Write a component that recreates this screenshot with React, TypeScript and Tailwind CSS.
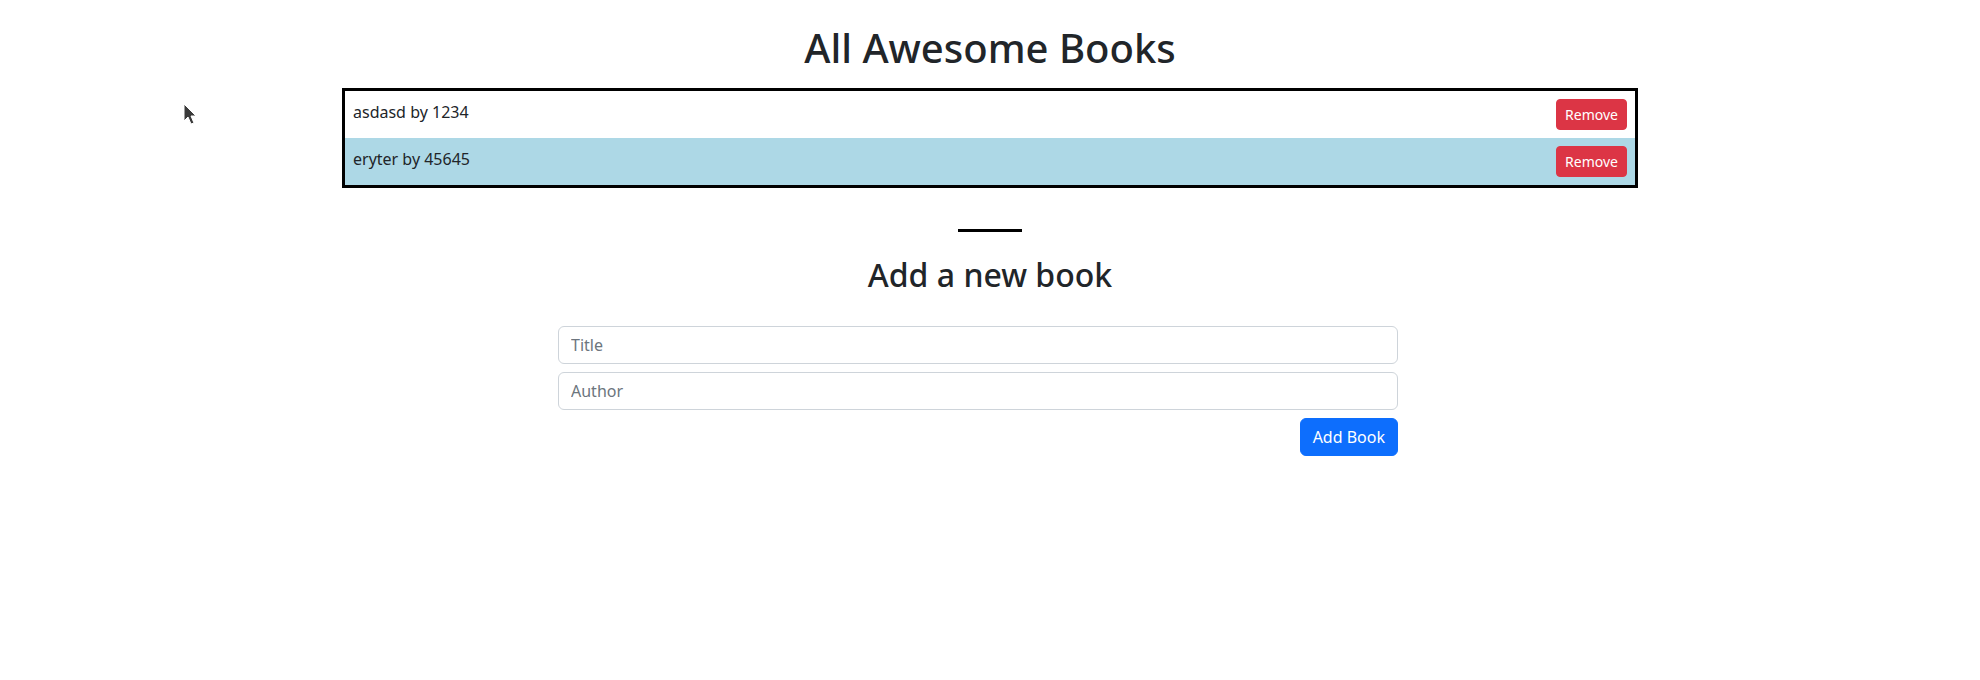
const books = [
  { title: "asdasd", author: "1234" },
  { title: "eryter", author: "45645" },
];

function Cursor() {
  return (
    <svg
      className="absolute left-[183px] top-[103px]"
      width="14"
      height="24"
      viewBox="0 0 14 24"
    >
      <path
        d="M1 1 L1 18 L5 14 L8 21 L11 20 L8 13 L13 13 Z"
        fill="#3a3a3a"
        stroke="#ffffff"
        strokeWidth="1"
        strokeLinejoin="round"
      />
    </svg>
  );
}

export default function App() {
  return (
    <div className="relative min-h-[680px] bg-white text-[#212529] font-['Noto_Sans',sans-serif]">
      <Cursor />
      <div className="mx-auto w-[1320px] px-3 pt-6">
        <h1 className="text-center text-[40px] leading-[1.2] font-medium">All Awesome Books</h1>

        <ul className="mt-4 border-[3px] border-black">
          {books.map((book, i) => (
            <li
              key={book.title}
              className={`flex items-start justify-between p-2 ${i % 2 === 1 ? "bg-[#add8e6]" : "bg-white"}`}
            >
              <p className="mt-px text-base leading-6">
                {book.title} by {book.author}
              </p>
              <button className="rounded border border-[#dc3545] bg-[#dc3545] px-2 py-1 text-sm leading-[21px] text-white">
                Remove
              </button>
            </li>
          ))}
        </ul>

        <hr className="mx-auto mt-[41px] h-[3px] w-16 border-0 bg-black" />

        <h2 className="mt-6 text-center text-[32px] leading-[1.2] font-medium">Add a new book</h2>

        <form className="mt-8 ml-[216px] flex w-[840px] flex-col">
          <input
            type="text"
            placeholder="Title"
            className="mb-2 h-[38px] rounded-md border border-[#ced4da] px-3 text-base placeholder:text-[#6c757d] outline-none"
          />
          <input
            type="text"
            placeholder="Author"
            className="mb-2 h-[38px] rounded-md border border-[#ced4da] px-3 text-base placeholder:text-[#6c757d] outline-none"
          />
          <div className="flex justify-end">
            <button
              type="button"
              className="h-[38px] rounded-md border border-[#0d6efd] bg-[#0d6efd] px-3 text-base text-white"
            >
              Add Book
            </button>
          </div>
        </form>
      </div>
    </div>
  );
}
